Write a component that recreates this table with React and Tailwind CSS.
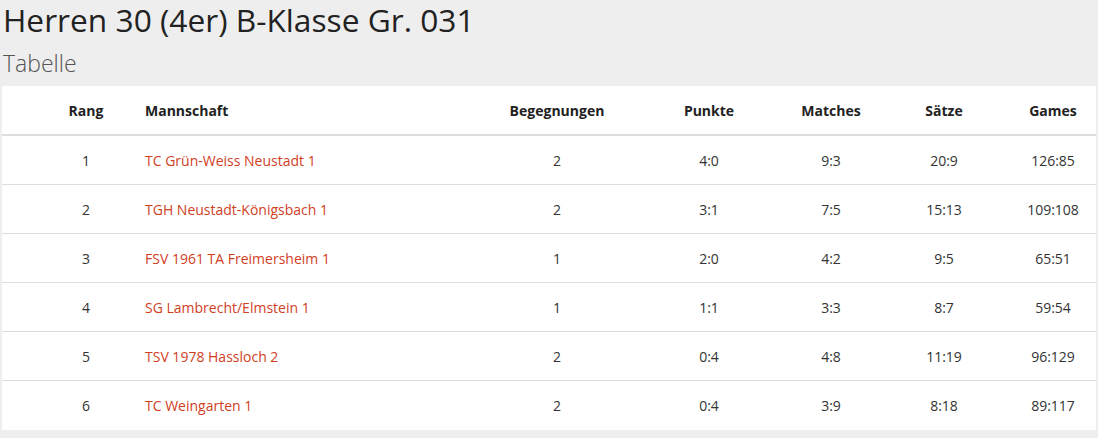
import React from 'react';

const rows = [
    { rang: 1, team: 'TC Grün-Weiss Neustadt 1', beg: 2, punkte: '4:0', matches: '9:3', saetze: '20:9', games: '126:85' },
    { rang: 2, team: 'TGH Neustadt-Königsbach 1', beg: 2, punkte: '3:1', matches: '7:5', saetze: '15:13', games: '109:108' },
    { rang: 3, team: 'FSV 1961 TA Freimersheim 1', beg: 1, punkte: '2:0', matches: '4:2', saetze: '9:5', games: '65:51' },
    { rang: 4, team: 'SG Lambrecht/Elmstein 1', beg: 1, punkte: '1:1', matches: '3:3', saetze: '8:7', games: '59:54' },
    { rang: 5, team: 'TSV 1978 Hassloch 2', beg: 2, punkte: '0:4', matches: '4:8', saetze: '11:19', games: '96:129' },
    { rang: 6, team: 'TC Weingarten 1', beg: 2, punkte: '0:4', matches: '3:9', saetze: '8:18', games: '89:117' },
];

const cols = 'grid grid-cols-[135px_335px_170px_134px_110px_116px_94px]';

const App = () => {
    return (
        <div className="flex min-h-[438px] w-full flex-col bg-[#eeeeee] font-['Open_Sans',sans-serif] pb-[8px]">
            <h1 className="pl-[3px] text-[31.7px] leading-[40px] font-normal text-[#222]">
                Herren 30 (4er) B-Klasse Gr. 031
            </h1>
            <h2 className="pl-[3px] mt-[8px] text-[23px] leading-[30px] font-light text-[#555]">
                Tabelle
            </h2>

            {/* Table */}
            <div className="mx-[2px] mt-[8px] bg-white">
                <div className={`${cols} h-[50px] items-center border-b-2 border-[#dddddd] text-[14px] font-bold text-[#222]`}>
                    <div className="pl-[33px] text-center">Rang</div>
                    <div className="pl-2">Mannschaft</div>
                    <div className="text-center">Begegnungen</div>
                    <div className="text-center">Punkte</div>
                    <div className="text-center">Matches</div>
                    <div className="text-center">Sätze</div>
                    <div className="pl-2 text-center">Games</div>
                </div>
                {rows.map((r, i) => (
                    <div
                        key={r.rang}
                        className={`${cols} h-[49px] items-center text-[14px] text-[#333] ${i < rows.length - 1 ? 'border-b border-[#dddddd]' : ''}`}
                    >
                        <div className="pl-[33px] text-center">{r.rang}</div>
                        <div className="pl-2">
                            <a href="#" className="text-[#d0401f]">{r.team}</a>
                        </div>
                        <div className="text-center">{r.beg}</div>
                        <div className="text-center">{r.punkte}</div>
                        <div className="text-center">{r.matches}</div>
                        <div className="text-center">{r.saetze}</div>
                        <div className="pl-2 text-center">{r.games}</div>
                    </div>
                ))}
            </div>
        </div>
    );
};

export default App;
